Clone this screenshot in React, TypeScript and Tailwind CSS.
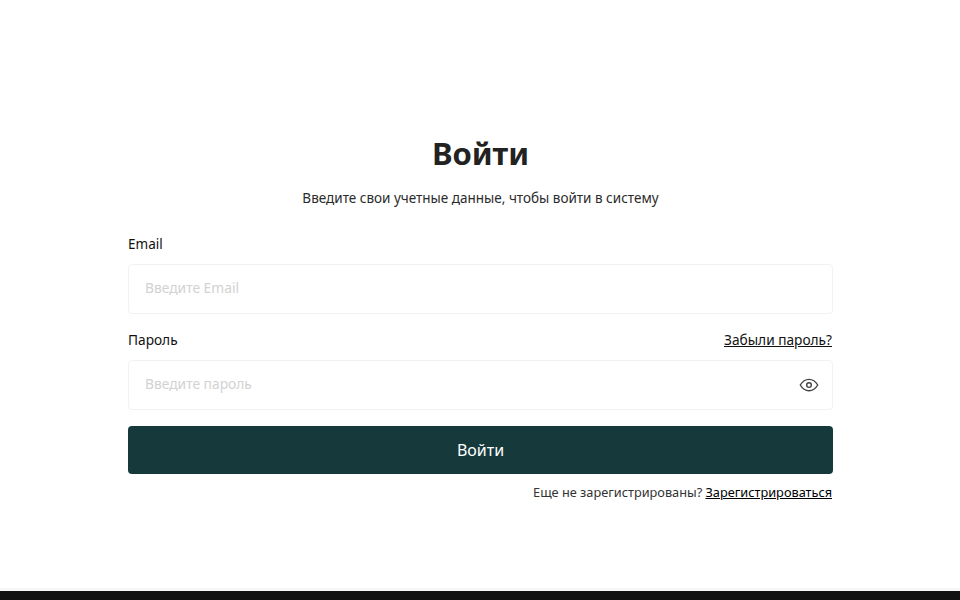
import React from "react";

const font = "[font-family:'Noto_Sans','Open_Sans',sans-serif]";

function Eye() {
  return (
    <svg width="20" height="20" viewBox="0 0 24 24" fill="none" stroke="#444444" strokeWidth="1.7" strokeLinecap="round" strokeLinejoin="round">
      <path d="M1.500 12c2.600-4.400 6.100-6.800 10.500-6.800s7.900 2.400 10.500 6.800c-2.600 4.400-6.100 6.800-10.500 6.800S4.100 16.400 1.500 12z" />
      <circle cx="12" cy="12" r="2.800" />
    </svg>
  );
}

export default function App() {
  return (
    <div className={`${font} h-[600px] flex flex-col bg-white`}>
      <main className="flex-1 flex flex-col items-center pl-[128px] pr-[127px] pt-[129px]">
        <h1 className="text-[31px] leading-[48px] font-bold text-[#222]">Войти</h1>
        <p className="mt-[11px] text-[13.500px] leading-[20px] text-[#2b2b2b]">Введите свои учетные данные, чтобы войти в систему</p>
        <form className="w-full mt-[26px]">
          <label className="block text-[13.500px] leading-[20px] text-[#111]">Email</label>
          <div className="mt-[10px] h-[50px] rounded-[4px] border border-[#f2f2f2] px-[16px] flex items-center text-[13.800px] text-[#d2d2d2]">
            <span className="-mt-[2px]">Введите Email</span>
          </div>
          <div className="mt-[16px] pr-[1px] flex justify-between text-[13.700px] leading-[20px] text-[#111]">
            <span>Пароль</span>
            <a className="underline">Забыли пароль?</a>
          </div>
          <div className="mt-[10px] h-[50px] rounded-[4px] border border-[#f2f2f2] pl-[16px] pr-[13px] flex items-center justify-between text-[13.800px] text-[#d2d2d2]">
            <span className="-mt-[2px]">Введите пароль</span>
            <Eye />
          </div>
          <button type="button" className="mt-[16px] w-full h-[48px] rounded-[4px] bg-[#163a3c] text-white text-[16px]">Войти</button>
          <p className="mt-[8px] pr-[1px] text-right text-[12.750px] leading-[20px] text-[#333]">
            Еще не зарегистрированы? <a className="underline text-black">Зарегистрироваться</a>
          </p>
        </form>
      </main>
      <footer className="h-[12px] bg-[#111] border-t-[3px] border-[#f7f7f7]" />
    </div>
  );
}
